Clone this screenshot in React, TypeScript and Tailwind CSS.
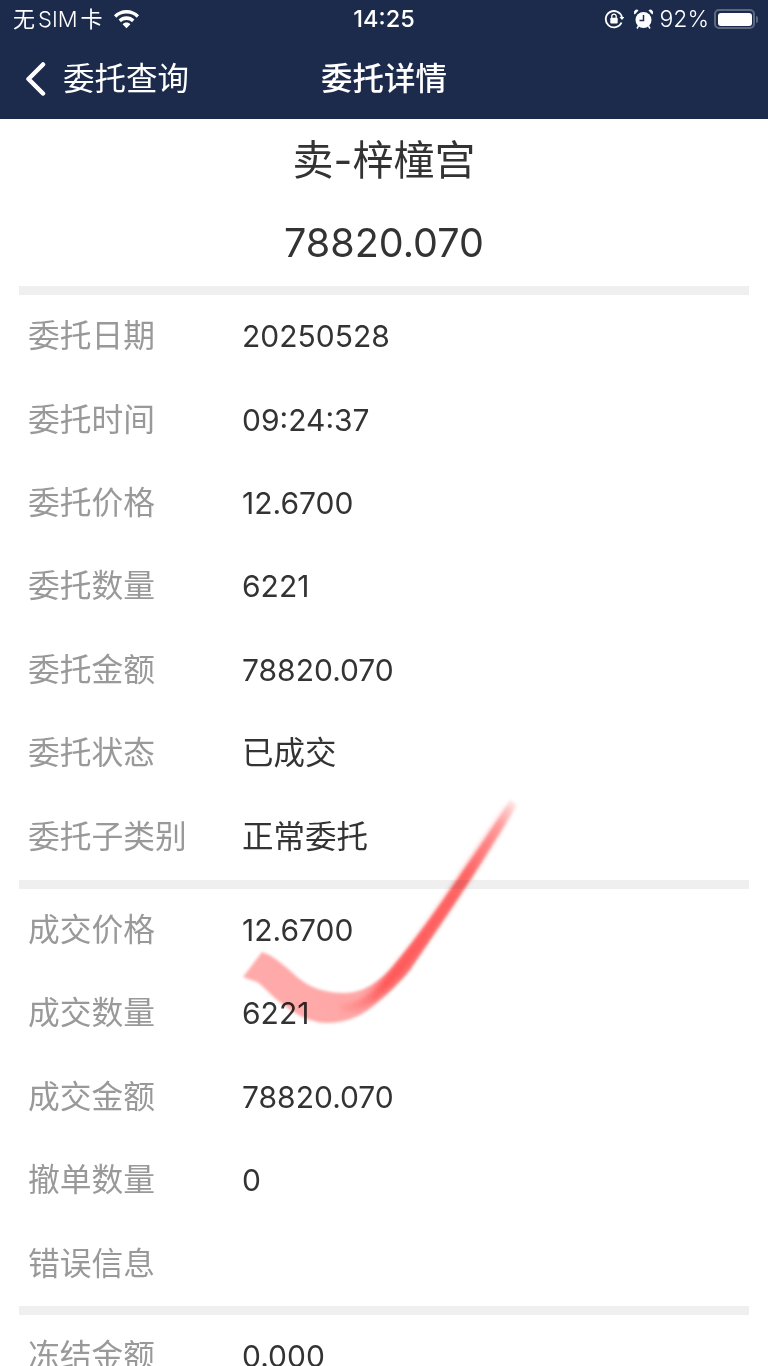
const orderRows = [
  ["委托日期", "20250528"],
  ["委托时间", "09:24:37"],
  ["委托价格", "12.6700"],
  ["委托数量", "6221"],
  ["委托金额", "78820.070"],
  ["委托状态", "已成交"],
  ["委托子类别", "正常委托"],
];

const dealRows = [
  ["成交价格", "12.6700"],
  ["成交数量", "6221"],
  ["成交金额", "78820.070"],
  ["撤单数量", "0"],
  ["错误信息", ""],
];

const Row = ({ label, value }: { label: string; value: string }) => {
  const numeric = /^[\d.:]+$/.test(value);
  return (
    <div className="flex h-[83.4px] items-center pb-[1px] pl-[28px]">
      <div className="w-[214px] text-[31.75px] leading-none text-[#999999]">{label}</div>
      <div className={numeric ? "text-[30px] leading-none text-[#333333]" : "text-[31.5px] leading-none text-[#333333]"}>
        {value}
      </div>
    </div>
  );
};

const Divider = () => <div className="mx-[19px] h-[9px] bg-[#efefef]" />;

const StatusBar = () => {
  return (
    <div className="grid h-[38px] grid-cols-3 items-center px-[9px] text-white">
      <div className="ml-[4px] flex items-center text-[22px] leading-none">
        <span className="mr-[10px] flex gap-[3px]">
          <span>无</span>
          <span className="font-light">SIM</span>
          <span>卡</span>
        </span>
        <svg width="27" height="19" viewBox="0 0 28 20" fill="#fff">
          <path d="M14 0C8.800 0 4.200 2.100.8 5.400l2.500 2.700C6 5.400 9.800 3.800 14 3.800s8 1.600 10.700 4.300l2.500-2.700C23.800 2.100 19.200 0 14 0z" />
          <path d="M14 6.700c-3.300 0-6.200 1.300-8.300 3.400l2.500 2.700c1.500-1.500 3.500-2.400 5.800-2.400s4.300.9 5.800 2.400l2.500-2.700c-2.100-2.100-5-3.400-8.300-3.400z" />
          <path d="M14 13.200c-1.700 0-3.100.7-4.100 1.700L14 19.300l4.100-4.400c-1-1-2.400-1.700-4.100-1.700z" />
        </svg>
      </div>
      <div className="text-center text-[23.5px] font-medium leading-none">14:25</div>
      <div className="flex items-center justify-end text-[24px] leading-none">
        <svg width="20" height="20" viewBox="0 0 20 20" fill="none" className="mr-[10px]">
          <path d="M18 8.500A8.200 8.200 0 1 0 17.500 13.500" stroke="#fff" strokeWidth="1.800" />
          <path d="M15.500 8h5l-2.500 3z" fill="#fff" />
          <rect x="6.300" y="8.700" width="7.400" height="5.800" rx="1" fill="#fff" />
          <path d="M7.800 9V7.300a2.200 2.200 0 0 1 4.400 0V9" stroke="#fff" strokeWidth="1.300" />
        </svg>
        <svg width="19" height="20" viewBox="0 0 19 20" fill="none" className="mr-[6px]">
          <circle cx="9.500" cy="11" r="8" fill="#fff" />
          <path d="M9.500 6v5.500H5.500" stroke="#1c2b4b" strokeWidth="1.500" />
          <path d="M.8 5.500 4.500 1.500a2.700 2.700 0 0 0-3.700 4zM18.200 5.500l-3.700-4a2.700 2.700 0 0 1 3.700 4z" fill="#fff" />
          <path d="M4.500 17 3 19.500M14.500 17l1.500 2.500" stroke="#fff" strokeWidth="1.500" />
        </svg>
        <span className="mr-[5px] text-[23px] font-light">92%</span>
        <div className="mr-[1px] flex items-center">
          <div className="flex h-[20px] w-[41px] items-center rounded-[5px] border-2 border-[#5d6880] p-[1.500px]">
            <div className="h-full w-full rounded-[3px] bg-white" />
          </div>
          <div className="ml-[1px] h-[7px] w-[2px] rounded-r-full bg-[#5d6880]" />
        </div>
      </div>
    </div>
  );
};

const CheckStroke = () => {
  return (
    <svg
      className="pointer-events-none absolute left-0 top-0 mix-blend-multiply"
      width="768"
      height="1366"
      viewBox="0 0 768 1366"
    >
      <defs>
        <linearGradient id="strokeFade" gradientUnits="userSpaceOnUse" x1="245" y1="985" x2="515" y2="802">
          <stop offset="0" stopColor="#ff8f8f" stopOpacity="0.75" />
          <stop offset="0.28" stopColor="#ff9090" stopOpacity="0.8" />
          <stop offset="0.42" stopColor="#ff7474" />
          <stop offset="0.75" stopColor="#ff8080" />
          <stop offset="0.92" stopColor="#ff9a9a" stopOpacity="0.8" />
          <stop offset="1" stopColor="#ffc0c0" stopOpacity="0.4" />
        </linearGradient>
        <linearGradient id="strokeCore" gradientUnits="userSpaceOnUse" x1="335" y1="1012" x2="510" y2="805">
          <stop offset="0" stopColor="#ff5c5c" stopOpacity="0" />
          <stop offset="0.2" stopColor="#ff5858" />
          <stop offset="0.7" stopColor="#ff6464" />
          <stop offset="1" stopColor="#ff8080" stopOpacity="0.1" />
        </linearGradient>
        <filter id="strokeBlur" x="-5%" y="-5%" width="110%" height="110%">
          <feGaussianBlur stdDeviation="1.800" />
        </filter>
        <filter id="coreBlur" x="-5%" y="-5%" width="110%" height="110%">
          <feGaussianBlur stdDeviation="2.500" />
        </filter>
      </defs>
      <path
        d="M262 952 C272 955 283 964 297 977 C310 988 326 993 343 993 C358 993 372 988 390 970 C420 935 460 880 510 800 L517 805 C490 850 450 910 410 970 C398 985 385 996 373 1006 C362 1016 345 1023 327 1023 C313 1023 298 1017 277 1000 C268 992 262 985 257 982 C252 980 247 979 243 977 Z"
        fill="url(#strokeFade)"
        filter="url(#strokeBlur)"
      />
      <path
        d="M340 1009 C370 1009 385 985 400 968 C430 932 470 870 510 807"
        fill="none"
        stroke="url(#strokeCore)"
        strokeWidth="10"
        filter="url(#coreBlur)"
      />
    </svg>
  );
};

export default function App() {
  return (
    <div className="relative h-[1366px] overflow-hidden bg-white font-[family-name:Inter,'Noto_Sans_CJK_SC',sans-serif]">
      <div className="h-[119px] bg-[#1c2b4b]">
        <StatusBar />
        <div className="grid h-[81px] grid-cols-3 items-center text-white">
          <div className="flex items-center pl-[25px]">
            <svg width="21" height="34" viewBox="0 0 21 34" fill="none" className="mr-[17px]">
              <path d="M18 2.500 3.500 17 18 31.500" stroke="#fff" strokeWidth="4.500" strokeLinecap="round" strokeLinejoin="round" />
            </svg>
            <span className="text-[31.5px] leading-none">委托查询</span>
          </div>
          <div className="text-center text-[31.5px] font-medium leading-none">委托详情</div>
          <div />
        </div>
      </div>

      <div className="flex h-[167px] flex-col items-center text-[#333333]">
        <div className="mt-[20px] text-[41px] leading-[42px]">卖-梓橦宫</div>
        <div className="mt-[41px] text-[39.5px] leading-[42px]">78820.070</div>
      </div>

      <Divider />
      {orderRows.map(([label, value]) => (
        <Row key={label} label={label} value={value} />
      ))}
      <div className="mt-[1px]">
        <Divider />
      </div>
      {dealRows.map(([label, value]) => (
        <Row key={label} label={label} value={value} />
      ))}
      <Divider />
      <Row label="冻结金额" value="0.000" />

      <CheckStroke />
    </div>
  );
}
